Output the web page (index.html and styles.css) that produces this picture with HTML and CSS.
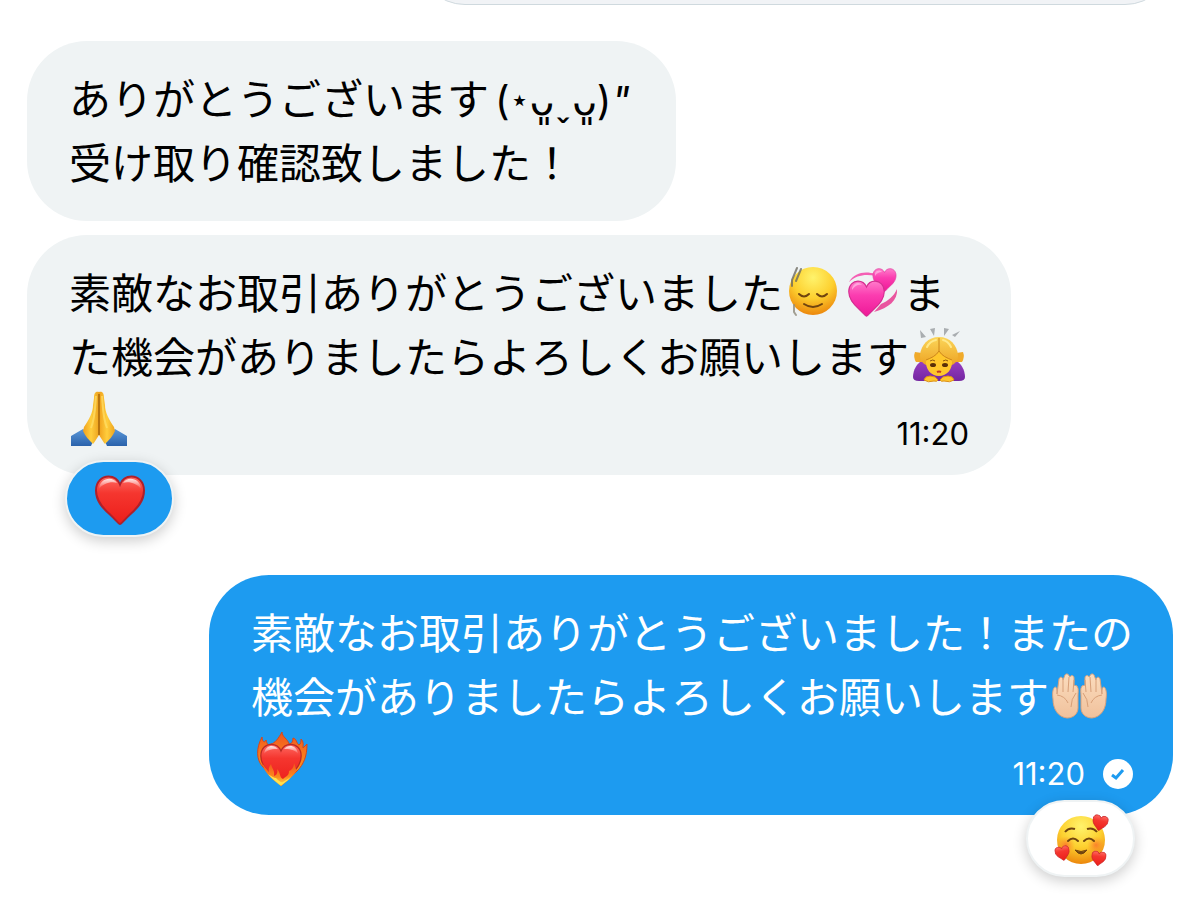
FILE: index.html
```
<!DOCTYPE html>
<html lang="ja">
<head>
  <meta charset="UTF-8">
  <meta name="viewport" content="width=device-width, initial-scale=1.0">
  <title>メッセージ</title>
  <link rel="stylesheet" href="styles.css">
</head>
<body>
  <!-- shared gradients and heart shape -->
  <svg class="defs" width="0" height="0" aria-hidden="true">
    <defs>
      <radialGradient id="face" cx="50%" cy="22%" r="78%">
        <stop offset="0" stop-color="#fff36c"/>
        <stop offset="0.55" stop-color="#fdd02f"/>
        <stop offset="1" stop-color="#ec870c"/>
      </radialGradient>
      <radialGradient id="blush">
        <stop offset="0" stop-color="#fb6a2c" stop-opacity="0.75"/>
        <stop offset="1" stop-color="#fb8a2c" stop-opacity="0"/>
      </radialGradient>
      <linearGradient id="red" x1="0" y1="0" x2="0" y2="1">
        <stop offset="0" stop-color="#ff6b63"/>
        <stop offset="0.35" stop-color="#f5362f"/>
        <stop offset="1" stop-color="#ec1e1a"/>
      </linearGradient>
      <linearGradient id="pink" x1="0" y1="0" x2="0" y2="1">
        <stop offset="0" stop-color="#ff7ccb"/>
        <stop offset="0.4" stop-color="#fb3db0"/>
        <stop offset="1" stop-color="#ee1897"/>
      </linearGradient>
      <linearGradient id="shine" x1="0" y1="0" x2="0" y2="1">
        <stop offset="0" stop-color="#fff" stop-opacity="0.85"/>
        <stop offset="1" stop-color="#fff" stop-opacity="0"/>
      </linearGradient>
      <linearGradient id="gold" x1="0" y1="0" x2="1" y2="0">
        <stop offset="0" stop-color="#f0a01c"/>
        <stop offset="0.5" stop-color="#ffce3d"/>
        <stop offset="1" stop-color="#eda31f"/>
      </linearGradient>
      <linearGradient id="hair" x1="0" y1="0" x2="0" y2="1">
        <stop offset="0" stop-color="#fbd65a"/>
        <stop offset="1" stop-color="#eda424"/>
      </linearGradient>
      <linearGradient id="sleeve" x1="0" y1="0" x2="0" y2="1">
        <stop offset="0" stop-color="#5a97d8"/>
        <stop offset="1" stop-color="#2a62ab"/>
      </linearGradient>
      <linearGradient id="purple" x1="0" y1="0" x2="0" y2="1">
        <stop offset="0" stop-color="#9a3fc4"/>
        <stop offset="1" stop-color="#7426a0"/>
      </linearGradient>
      <linearGradient id="palm" x1="0" y1="0" x2="0" y2="1">
        <stop offset="0" stop-color="#fbdcbd"/>
        <stop offset="1" stop-color="#f0c19c"/>
      </linearGradient>
      <linearGradient id="flame" x1="0" y1="0" x2="0" y2="1">
        <stop offset="0" stop-color="#f0561d"/>
        <stop offset="0.6" stop-color="#fb8a1e"/>
        <stop offset="1" stop-color="#ffe14a"/>
      </linearGradient>
      <symbol id="heart" viewBox="0 0 100 100">
        <path d="M50 98C47 98 40 88 30 79C14 65 2 51 2 31C2 13 14 3 27 3C38 3 46 9 50 19C54 9 62 3 73 3C86 3 98 13 98 31C98 51 86 65 70 79C60 88 53 98 50 98Z"/>
      </symbol>
    </defs>
  </svg>

  <main class="chat">
    <div class="previous"><div class="previous-card"></div></div>

    <div class="message received">
      <p class="text">ありがとうございます<span class="kaomoji">(<span class="star">⋆</span>ᴗ͈ˬᴗ͈)<i>"</i></span><br>受け取り確認致しました！</p>
    </div>

    <div class="message received">
      <p class="text">素敵なお取引ありがとうございました<svg class="emoji" viewBox="0 0 56 56" role="img" aria-label="relieved face">
          <circle cx="28" cy="28" r="24" fill="url(#face)"/>
          <path d="M14 31q5 5 10 0M32 31q5 5 10 0" fill="none" stroke="#70440f" stroke-width="2" stroke-linecap="round"/>
          <path d="M19 41q9 6 18 0" fill="none" stroke="#70440f" stroke-width="2" stroke-linecap="round"/>
          <path d="M12 5L7 17L7 23M16 6L11 18" fill="none" stroke="#6d6a60" stroke-width="2" stroke-linecap="round" opacity="0.8"/>
          <path d="M9 42L9 49L11 52" fill="none" stroke="#8f8a7a" stroke-width="2" stroke-linecap="round" opacity="0.8"/>
        </svg><svg class="emoji" viewBox="0 0 56 56" role="img" aria-label="revolving hearts">
          <path d="M4 19C10 9 20 8 31 11L31 13C20 11 12 12 4 19Z" fill="#f45fb4"/>
          <path d="M52 26C53 37 44 45 29 49L36 41C43 38 49 33 52 26Z" fill="#e9559f"/>
          <use href="#heart" x="27" y="5" width="25" height="24" fill="url(#pink)" stroke="#e0409f" stroke-width="3"/>
          <use href="#heart" x="3" y="17" width="37" height="37" fill="url(#pink)" stroke="#d42f90" stroke-width="3"/>
          <path d="M7 25C9 19 15 19 17 22C14 21 10 22 7 27ZM30 10C32 7 35 7 37 9C34 9 32 10 30 13Z" fill="#fff" opacity="0.4"/>
        </svg>ま<br>た機会がありましたらよろしくお願いします<svg class="emoji" viewBox="0 0 56 56" role="img" aria-label="woman bowing">
          <path d="M9 3L15 10L10 11ZM19 2L24 1L23 9ZM33 1L38 2L33 9ZM49 4L44 10L41 8Z" fill="#a9adb0"/>
          <path d="M12 33C6 36 2 43 2 50Q2 54 8 54L48 54Q54 54 54 50C54 43 50 36 44 33Z" fill="url(#purple)"/>
          <path d="M11 26L4 25Q2 30 5 35L13 35ZM45 26L52 25Q54 30 51 35L43 35Z" fill="#f0aa2a"/>
          <path d="M28 10C17 10 10 18 9 28C9 33 11 36 15 38L41 38C45 36 47 33 47 28C46 18 39 10 28 10Z" fill="url(#hair)"/>
          <path d="M28 24C25 29 20 31 15 33C14 42 20 49 28 49C36 49 42 42 41 33C36 31 31 29 28 24Z" fill="#ffc72c"/>
          <path d="M28 11L28 24C25 29 20 31 15 33M28 24C31 29 36 31 41 33" fill="none" stroke="#cd861b" stroke-width="1"/>
          <path d="M16 20Q19 14 25 13M32 13Q37 14 40 20" fill="none" stroke="#ffe98a" stroke-width="2" stroke-linecap="round"/>
          <ellipse cx="22" cy="38" rx="3" ry="2" fill="#5a2f08"/>
          <ellipse cx="34" cy="38" rx="3" ry="2" fill="#5a2f08"/>
          <path d="M19 34q3-2 5 0M32 34q3-2 5 0" fill="none" stroke="#8a5510" stroke-width="1"/>
          <path d="M26 45q2-1 4 0" fill="none" stroke="#c23a22" stroke-width="2"/>
          <path d="M13 53Q14 49 19 49Q25 49 27 53Q26 55 23 54Q17 56 13 53ZM43 53Q42 49 37 49Q31 49 29 53Q30 55 33 54Q39 56 43 53Z" fill="#ffc52d" stroke="#dc9119" stroke-width="1"/>
        </svg><br><svg class="emoji" viewBox="0 0 56 56" role="img" aria-label="folded hands">
          <path d="M0 45L12 38L23 48L20 55L0 55ZM56 45L44 38L33 48L36 55L56 55Z" fill="url(#sleeve)"/>
          <path d="M28 1C24 0 23 3 23 7L22 14C22 21 18 29 13 36L12 40C14 45 18 49 22 53C25 51 28 48 28 44Z" fill="url(#gold)"/>
          <path d="M28 1C32 0 33 3 33 7L34 14C34 21 38 29 43 36L44 40C42 45 38 49 34 53C31 51 28 48 28 44Z" fill="url(#gold)"/>
          <path d="M28 3L28 44" fill="none" stroke="#b8740f" stroke-width="2"/>
          <path d="M28 44L21 55L35 55Z" fill="#eff3f4"/>
          <path d="M25 5C24 18 24 27 20 37M31 5C32 18 32 27 36 37" fill="none" stroke="#ffe06a" stroke-width="2" opacity="0.7"/>
        </svg><span class="meta"><time>11:20</time></span></p>
      <button class="reaction liked" type="button" aria-label="リアクション ハート">
        <svg class="emoji" viewBox="0 0 56 56">
          <use href="#heart" x="3" y="4" width="50" height="50" fill="url(#red)" stroke="#b0202a" stroke-width="4"/>
          <path d="M7 18C7 8 20 4 25 12C20 10 11 12 7 18ZM49 18C49 8 36 4 31 12C36 10 45 12 49 18Z" fill="url(#shine)"/>
        </svg>
      </button>
    </div>

    <div class="message sent">
      <p class="text">素敵なお取引ありがとうございました！またの<br>機会がありましたらよろしくお願いします<svg class="emoji" viewBox="0 0 56 56" role="img" aria-label="palms up together">
          <g id="hand">
            <path d="M2 32C1 26 2 21 4 20C6 20 6 23 6 27L8 12C9 9 12 10 12 13L14 8C15 6 18 7 18 9L19 10C20 8 23 8 23 11L23 18C24 19 25 18 26 19C28 22 27 25 27 29L27 41C27 47 22 51 16 51C7 50 2 42 2 32Z" fill="url(#palm)" stroke="#d9a27c" stroke-width="1"/>
            <path d="M12 13L12 25M18 10L17 25M23 13L22 25M6 28Q14 29 17 36M25 26Q20 32 20 40" fill="none" stroke="#d79f78" stroke-width="1"/>
          </g>
          <use href="#hand" transform="translate(57 0) scale(-1 1)"/>
        </svg><br><svg class="emoji" viewBox="0 0 56 56" role="img" aria-label="heart on fire">
          <path d="M10 36C3 29 3 17 9 6C9 11 12 12 13 9C14 13 15 15 18 13C22 12 25 8 29 1C29 6 35 8 36 13C39 13 40 10 40 7C44 8 43 12 46 14C48 13 48 10 48 8C51 11 50 14 50 17L54 13C54 25 51 33 44 40L28 55Z" fill="url(#flame)" stroke="#d5471b" stroke-width="1"/>
          <use href="#heart" x="7" y="12" width="42" height="42" fill="url(#red)" stroke="#b92a23" stroke-width="3"/>
          <path d="M11 23C12 14 21 13 25 18C20 18 15 18 11 23ZM45 23C44 14 35 13 31 18C36 18 41 18 45 23Z" fill="url(#shine)"/>
          <path d="M28 55C20 49 11 42 9 32C12 36 14 39 16 41C15 37 17 35 18 33C19 38 22 39 21 45C24 44 25 41 24 38C28 42 26 46 30 48C33 45 36 45 36 40C39 39 41 36 41 32C43 36 42 38 44 39C40 46 33 51 28 55Z" fill="url(#flame)"/>
          <path d="M28 54C22 50 18 47 15 43C18 45 21 47 23 47C26 50 28 52 30 51C34 48 37 48 39 43C38 47 33 51 28 54Z" fill="#ffe34f"/>
        </svg><span class="meta"><time>11:20</time><svg class="read" viewBox="0 0 30 30" role="img" aria-label="既読">
          <circle cx="15" cy="15" r="15" fill="#fff"/>
          <path d="M9 16L13 19L20 11" fill="none" stroke="#1d9bf0" stroke-width="3"/>
        </svg></span></p>
      <button class="reaction" type="button" aria-label="リアクション 笑顔とハート">
        <svg class="emoji" viewBox="0 0 56 56">
          <circle cx="28" cy="29" r="24" fill="url(#face)"/>
          <circle cx="13" cy="34" r="9" fill="url(#blush)"/>
          <circle cx="43" cy="34" r="9" fill="url(#blush)"/>
          <path d="M12 21Q16 16 22 18M34 18Q40 16 44 21" fill="none" stroke="#70440f" stroke-width="2"/>
          <path d="M15 30Q20 25 25 30M31 30Q36 25 41 30" fill="none" stroke="#70440f" stroke-width="2" stroke-linecap="round"/>
          <path d="M22 39Q28 47 34 39Q28 42 22 39Z" fill="#70440f" stroke="#70440f" stroke-width="1"/>
          <g fill="url(#red)" stroke="#c8262a" stroke-width="5">
            <use href="#heart" x="39" y="4" width="16" height="16" transform="rotate(12 47 12)"/>
            <use href="#heart" x="2" y="35" width="15" height="15" transform="rotate(-12 9 42)"/>
            <use href="#heart" x="38" y="40" width="15" height="15" transform="rotate(8 45 48)"/>
          </g>
        </svg>
      </button>
    </div>
  </main>
</body>
</html>
```
FILE: styles.css
```
*{
  box-sizing: border-box;
}
body{
  margin: 0;
  background-color: white;
  color: black;
  font-family: Inter, "Noto Sans CJK JP", sans-serif;
}
.defs{
  position: absolute;
}
.chat{
  display: flex;
  flex-direction: column;
  align-items: flex-start;
  padding: 0 27px 84px;
}

/* bottom edge of the message scrolled off above */
.previous{
  display: flex;
  align-items: flex-end;
  justify-content: flex-end;
  width: 100%;
  height: 5px;
  overflow: hidden;
  margin-bottom: 36px;
}
.previous-card{
  flex: none;
  width: 66%;
  height: 120px;
  border: 1px solid #cfd9de;
  border-radius: 48px;
  background-color: #f1f3f6;
}

.message{
  position: relative;
  max-width: 100%;
  min-height: 180px;
  padding: 24px 42px;
  border-radius: 60px;
}
.received{
  background-color: #eff3f4;
}
.received + .received{
  margin-top: 14px;
}
.sent{
  align-self: flex-end;
  margin-top: 100px;
  padding-right: 40px;
  background-color: #1d9bf0;
  color: white;
}
.text{
  margin: 0;
  font-family: "Noto Sans CJK JP", sans-serif;
  font-size: 42px;
  line-height: 64px;
}
.kaomoji{
  margin: 0 4px 0 6px;
  font-family: Inter, "DejaVu Sans", sans-serif;
  font-size: 40px;
  line-height: 1;
}
.star{
  font-size: 32px;
  line-height: 1;
  vertical-align: 4px;
}
.emoji{
  width: 56px;
  height: 56px;
  margin: 4px 2px;
  vertical-align: top;
}

.meta{
  float: right;
  display: flex;
  align-items: center;
  gap: 18px;
  height: 64px;
  padding-top: 30px;
  font-family: Inter, sans-serif;
  font-size: 31px;
  line-height: 36px;
}
.read{
  width: 30px;
  height: 30px;
}

.reaction{
  position: absolute;
  left: 38px;
  bottom: -62px;
  display: flex;
  align-items: center;
  justify-content: center;
  width: 109px;
  height: 77px;
  padding: 0;
  border: 2px solid #eff3f4;
  border-radius: 39px;
  background-color: white;
  box-shadow: 0 4px 14px rgba(0, 0, 0, 0.2);
  cursor: pointer;
}
.liked{
  background-color: #1d9bf0;
}
.sent .reaction{
  left: auto;
  right: 38px;
}
```
